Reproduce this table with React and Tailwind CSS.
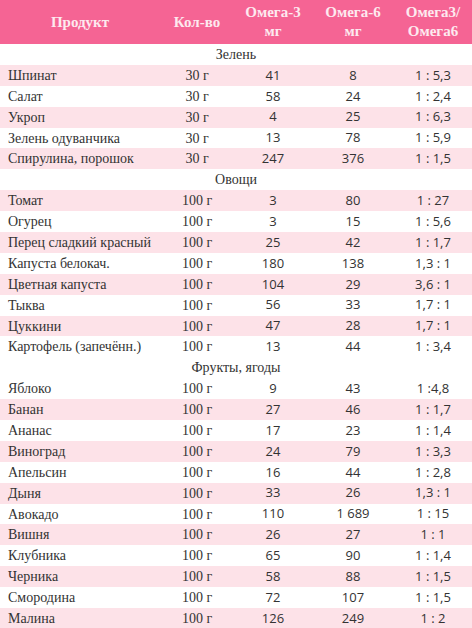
import React from "react";

const sections = [
  {
    title: "Зелень",
    rows: [
      ["Шпинат", "30 г", "41", "8", "1 : 5,3"],
      ["Салат", "30 г", "58", "24", "1 : 2,4"],
      ["Укроп", "30 г", "4", "25", "1 : 6,3"],
      ["Зелень одуванчика", "30 г", "13", "78", "1 : 5,9"],
      ["Спирулина, порошок", "30 г", "247", "376", "1 : 1,5"],
    ],
  },
  {
    title: "Овощи",
    rows: [
      ["Томат", "100 г", "3", "80", "1 : 27"],
      ["Огурец", "100 г", "3", "15", "1 : 5,6"],
      ["Перец сладкий красный", "100 г", "25", "42", "1 : 1,7"],
      ["Капуста белокач.", "100 г", "180", "138", "1,3 : 1"],
      ["Цветная капуста", "100 г", "104", "29", "3,6 : 1"],
      ["Тыква", "100 г", "56", "33", "1,7 : 1"],
      ["Цуккини", "100 г", "47", "28", "1,7 : 1"],
      ["Картофель (запечённ.)", "100 г", "13", "44", "1 : 3,4"],
    ],
  },
  {
    title: "Фрукты, ягоды",
    rows: [
      ["Яблоко", "100 г", "9", "43", "1 :4,8"],
      ["Банан", "100 г", "27", "46", "1 : 1,7"],
      ["Ананас", "100 г", "17", "23", "1 : 1,4"],
      ["Виноград", "100 г", "24", "79", "1 : 3,3"],
      ["Апельсин", "100 г", "16", "44", "1 : 2,8"],
      ["Дыня", "100 г", "33", "26", "1,3 : 1"],
      ["Авокадо", "100 г", "110", "1 689", "1 : 15"],
      ["Вишня", "100 г", "26", "27", "1 : 1"],
      ["Клубника", "100 г", "65", "90", "1 : 1,4"],
      ["Черника", "100 г", "58", "88", "1 : 1,5"],
      ["Смородина", "100 г", "72", "107", "1 : 1,5"],
      ["Малина", "100 г", "126", "249", "1 : 2"],
    ],
  },
];

const grid = "grid grid-cols-[160px_74px_78px_82px_78px]";
const serif = "font-['Liberation_Serif',serif]";
const sans = "font-['Open_Sans',sans-serif]";

function App() {
  let i = 0;
  return (
    <div className="w-[472px] bg-white text-[#333333] overflow-hidden">
      <div className={`${grid} h-[44px] bg-[#f56494] text-[#fde9ef] font-bold text-[15px] leading-[19px] ${serif} items-center text-center`}>
        <div>Продукт</div>
        <div>Кол-во</div>
        <div>
          Омега-3
          <br />
          мг
        </div>
        <div>
          Омега-6
          <br />
          мг
        </div>
        <div>
          Омега3/
          <br />
          Омега6
        </div>
      </div>
      {sections.map((s) => {
        i++;
        return (
          <React.Fragment key={s.title}>
            <div className={`h-[20.9px] flex items-center justify-center text-[14px] ${serif}`}>
              {s.title}
            </div>
            {s.rows.map((r) => {
              i++;
              const odd = i % 2 === 0;
              return (
                <div
                  key={r[0]}
                  className={`${grid} h-[20.9px] items-center text-[14px] ${odd ? "bg-[#fde2e8]" : "bg-white"}`}
                >
                  <div className={`pl-2 whitespace-nowrap ${serif}`}>{r[0]}</div>
                  <div className={`text-center ${serif}`}>{r[1]}</div>
                  <div className={`text-center text-[13px] ${sans}`}>{r[2]}</div>
                  <div className={`text-center text-[13px] ${sans}`}>{r[3]}</div>
                  <div className={`text-center text-[13px] ${sans}`}>{r[4]}</div>
                </div>
              );
            })}
          </React.Fragment>
        );
      })}
    </div>
  );
}

export default App;
